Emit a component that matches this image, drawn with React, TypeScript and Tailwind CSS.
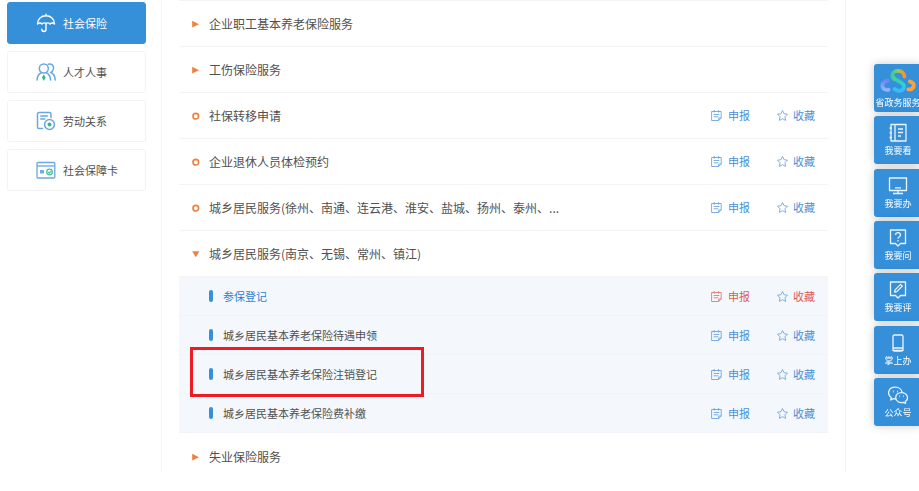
import React from 'react';

type MarkerKind = 'closed' | 'open' | 'leaf';

interface Service {
    name: string;
    kind: MarkerKind;
    children?: { name: string; active?: boolean }[];
}

const services: Service[] = [
    { name: '企业职工基本养老保险服务', kind: 'closed' },
    { name: '工伤保险服务', kind: 'closed' },
    { name: '社保转移申请', kind: 'leaf' },
    { name: '企业退休人员体检预约', kind: 'leaf' },
    { name: '城乡居民服务(徐州、南通、连云港、淮安、盐城、扬州、泰州、...', kind: 'leaf' },
    {
        name: '城乡居民服务(南京、无锡、常州、镇江)',
        kind: 'open',
        children: [
            { name: '参保登记', active: true },
            { name: '城乡居民基本养老保险待遇申领' },
            { name: '城乡居民基本养老保险注销登记' },
            { name: '城乡居民基本养老保险费补缴' },
        ],
    },
    { name: '失业保险服务', kind: 'closed' },
];

const HIGHLIGHTED = '城乡居民基本养老保险注销登记';

const UmbrellaIcon = () => (
    <svg className="w-5 h-5" viewBox="0 0 20 20" fill="none" stroke="#fff" strokeWidth="1.4" strokeLinecap="round" strokeLinejoin="round">
        <path d="M10 1.200v1.500M1.500 11C1.500 6.200 5.200 2.800 10 2.800s8.500 3.400 8.500 8.200c-1-1.400-3.500-1.400-4.500 0-1-1.400-3-1.400-4-.4-1-1-3-1-4 .4-1-1.400-3.500-1.400-4.500 0Z" />
        <path d="M10 10.600v5.700c0 2.900-4.200 2.900-4.200 0" />
    </svg>
);

const PeopleIcon = () => (
    <svg className="w-5 h-5" viewBox="0 0 20 20" fill="none" stroke="#6aa8e0" strokeWidth="1.5" strokeLinecap="round">
        <circle cx="7.800" cy="6.500" r="4.500" />
        <path d="M1 18c.2-3.600 1.600-6 4.300-7.200M14.600 18c-.2-3.600-1.600-6-4.300-7.200" />
        <path d="M12.200 2.300c3.300-1 5.600 1 5.400 4-.1 2-1.100 3.400-2.600 4.200 2.600 1.200 4 3.900 4.200 7.500" />
        <path d="m7.800 13.800 1 1.800-1 1.800-1-1.800Z" fill="#35b98c" stroke="#35b98c" />
    </svg>
);

const ContractIcon = () => (
    <svg className="w-5 h-5" viewBox="0 0 20 20" fill="none" stroke="#6aa8e0" strokeWidth="1.5" strokeLinecap="round">
        <path d="M6.500 17.500H3A1.500 1.500 0 0 1 1.500 16V3A1.500 1.500 0 0 1 3 1.500h10.500A1.500 1.500 0 0 1 15 3v3.500M4.800 5h6.700M4.800 8h4" />
        <circle cx="13.500" cy="13.500" r="4.900" />
        <circle cx="13.500" cy="13.500" r="2" fill="#35b98c" stroke="none" />
    </svg>
);

const CardIcon = () => (
    <svg className="w-5 h-5" viewBox="0 0 20 20" fill="none" stroke="#6aa8e0" strokeWidth="1.3">
        <rect x="1" y="2.500" width="17.800" height="15.500" rx="1" />
        <path d="M1 6h17.800" />
        <path d="M4 10h4v3.500H4z" fill="#6faae0" stroke="none" />
        <circle cx="13.500" cy="12" r="2.800" stroke="#4cc09a" />
        <path d="m12.200 12 1.100 1.100 2-2.200" stroke="#4cc09a" />
    </svg>
);

const categories = [
    { name: '社会保险', icon: <UmbrellaIcon />, active: true },
    { name: '人才人事', icon: <PeopleIcon /> },
    { name: '劳动关系', icon: <ContractIcon /> },
    { name: '社会保障卡', icon: <CardIcon /> },
];

const Marker = ({ kind }: { kind: MarkerKind }) => (
    <svg className="w-2 h-2 shrink-0" viewBox="0 0 8 8" fill="#f08040">
        {kind === 'closed' && <path d="M.2.800 7 4.200.2 7.600Z" />}
        {kind === 'open' && <path d="M.200 1.300h7.200L3.800 7.300Z" />}
        {kind === 'leaf' && <circle cx="3.800" cy="4.200" r="2.800" fill="none" stroke="#f08040" strokeWidth="1.700" />}
    </svg>
);

const Actions = ({ active = false }: { active?: boolean }) => (
    <div className={`flex items-center gap-[27px] text-[11px] ${active ? 'text-[#dd5a56]' : 'text-[#4a8fd8]'}`}>
        <a href="#apply" className="flex items-center gap-[6px]">
            <svg className="w-[11px] h-[11px]" viewBox="0 0 11 11" fill="none" stroke="currentColor" strokeWidth=".9" opacity=".8">
                <path d="M.6 1.500h9.600v6.500L7.700 10.500H.6ZM10.200 8H7.700v2.500M3.200 0v2.600M7.600 0v2.600M2.700 4.500h5.600M2.700 6.800h4.600" />
            </svg>
            申报
        </a>
        <a href="#favorite" className="flex items-center gap-[5px]">
            <svg className="w-[11px] h-[11px]" viewBox="0 0 11 11" fill="none" stroke="#6ea9e0" strokeWidth=".9" strokeLinejoin="round">
                <path d="m5.500.500 1.600 3.200 3.400.500L8 6.700l.6 3.700-3.100-1.700-3.100 1.700L3 6.700.5 4.200l3.400-.5Z" />
            </svg>
            收藏
        </a>
    </div>
);

const LogoIcon = () => (
    <svg className="w-9 h-7 shrink-0" viewBox="0 0 36 28" fill="none" strokeWidth="3.800" strokeLinecap="round">
        <defs>
            <linearGradient id="sTop" x1="0" y1="0" x2="1" y2="0">
                <stop offset="0" stopColor="#35cfa0" />
                <stop offset=".5" stopColor="#a0c850" />
                <stop offset="1" stopColor="#ff8f2e" />
            </linearGradient>
            <linearGradient id="sBottom" x1="0" y1="0" x2="0" y2="1">
                <stop offset="0" stopColor="#35cfa0" />
                <stop offset=".5" stopColor="#2fd0d8" />
                <stop offset="1" stopColor="#35baff" />
            </linearGradient>
            <linearGradient id="left" x1="0" y1="0" x2="0" y2="1">
                <stop offset="0" stopColor="#6f86f0" />
                <stop offset="1" stopColor="#94b2ff" />
            </linearGradient>
        </defs>
        <path d="M7.500 13.500C3.500 14 1.900 17 2.500 19.500c.8 2.500 3 3.700 6 3.200" stroke="url(#left)" />
        <path d="M30 14.500c3.300 1.200 4.300 3.200 3.500 5.200-.8 2-2.800 3-5.200 2.700" stroke="#ffa23a" />
        <path d="M13.500 10.500c2.500 3.700 10.500 4 10.500 9 0 4.700-6 5.700-9.500 2.500" stroke="url(#sBottom)" />
        <path d="M24.500 9.500c-.5-7.200-11.500-7.200-12.200-1.500-.2 1.700.5 3 1.700 4" stroke="url(#sTop)" />
    </svg>
);

const shortcuts = [
    {
        name: '我要看',
        icon: <path d="M3 1.500h15v16.500H3zM7 1.500v16.500M1.500 5H4M1.500 9.800H4M1.500 14.500H4M10 6h5M10 9.500h5M10 13h3" />,
    },
    { name: '我要办', icon: <path d="M1.500 2h17v12.500h-17zM10 14.500V17.500M5 17.500h10M7 11.800h6" /> },
    {
        name: '我要问',
        icon: <path d="M2.500 2h15v13.500h-5L10 18l-2.500-2.500h-5zM7.500 7c0-3.300 5-3.300 5 0 0 1.800-2.500 1.800-2.500 3.800M10 12v1.500" />,
    },
    {
        name: '我要评',
        icon: <path d="M2.500 2h15v13.500h-5L10 18l-2.500-2.500h-5zM6.500 12.200l.6-2.300 5.500-5.500 1.700 1.700-5.500 5.500z" />,
    },
    { name: '掌上办', icon: <path d="M5 3.500A1.500 1.500 0 0 1 6.500 2h7A1.500 1.500 0 0 1 15 3.500v13a1.500 1.500 0 0 1-1.500 1.500h-7A1.500 1.500 0 0 1 5 16.500zM5 15h10v2.500H5z" /> },
    {
        name: '公众号',
        icon: (
            <>
                <path d="M8 14c-1 0-2-.1-2.800-.4L2.700 15l.5-2.600C-1.800 8.700.9 2.200 7.200 2.200c3.800 0 6.600 2.300 7 5.400" />
                <path d="M17.300 16.600c4.500-3.400 1.300-9-3.600-9-3.600 0-6 2.300-6 5 0 3.800 3.800 5.700 7.700 4.700l2.200 1.100Z" />
                <path d="M4.900 6.500h.7M9.200 6.500h.7M11.300 11.200h.6M15.400 11.200h.6" strokeWidth="1.900" />
            </>
        ),
    },
];

export default function App() {
    return (
        <div className="flex items-start bg-white text-[#505050] font-['Noto_Sans_CJK_SC',sans-serif]">
            <nav className="w-[146px] shrink-0 pl-[7px] pt-[2px] flex flex-col gap-[7px]">
                {categories.map(c => (
                    <button
                        key={c.name}
                        type="button"
                        className={`h-[42px] pl-7 flex items-center gap-[7px] rounded-[3px] border text-[11px] cursor-pointer ${c.active ? 'bg-[#3690d9] border-[#3690d9] text-white' : 'bg-white border-[#f3f3f3]'}`}
                    >
                        {c.icon}
                        <span>{c.name}</span>
                    </button>
                ))}
            </nav>

            <main className="flex-1 min-w-0 ml-[15px] mr-[73px] px-[17px] border-x border-[#f4f4f4]">
                <ul className="border-t border-[#f4f4f4]">
                    {services.map((s, i) => (
                        <li key={s.name}>
                            <div className={`flex items-center justify-between px-[13px] ${i === services.length - 1 ? 'h-[39px] pt-2' : 'h-[46px] border-b border-[#f4f4f4]'}`}>
                                <div className="flex items-center gap-[9px] text-[12px]">
                                    <Marker kind={s.kind} />
                                    <span>{s.name}</span>
                                </div>
                                {s.kind === 'leaf' && <Actions />}
                            </div>

                            {s.children && (
                                <ul className="bg-[#f4f8fd]">
                                    {s.children.map(c => (
                                        <li key={c.name} className="relative h-[39px] pl-[30px] pr-[13px] flex items-center justify-between border-b border-[#f0f4f9]">
                                            <div className="flex items-center gap-[10px] text-[11px]">
                                                <span className="w-1 h-3 rounded-[2px] bg-[#3690d9]" />
                                                <span className={c.active ? 'text-[#2f7fd0]' : ''}>{c.name}</span>
                                            </div>
                                            <Actions active={c.active} />
                                            {c.name === HIGHLIGHTED && (
                                                <div className="absolute left-[11px] -top-2 w-[234px] h-[50px] border-[3px] border-[#ed1c24] pointer-events-none" />
                                            )}
                                        </li>
                                    ))}
                                </ul>
                            )}
                        </li>
                    ))}
                </ul>
            </main>

            {/* Floating shortcuts, docked slightly past the right edge */}
            <aside className="fixed top-16 -right-[3px] w-12 h-[362px] flex flex-col justify-between text-[9px] leading-3 text-white">
                <a href="#gov" className="h-12 flex flex-col items-center justify-center gap-[2px] rounded-[3px] bg-[#3690d9] shadow-[0_0_10px_rgba(0,0,0,0.2)] whitespace-nowrap">
                    <LogoIcon />
                    省政务服务
                </a>
                {shortcuts.map(s => (
                    <a key={s.name} href="#shortcut" className="h-12 flex flex-col items-center justify-center gap-[2px] rounded-[3px] bg-[#3690d9] shadow-[0_0_10px_rgba(0,0,0,0.2)]">
                        <svg className="w-5 h-5" viewBox="0 0 20 20" fill="none" stroke="#fff" strokeWidth="1.300" strokeLinejoin="round" opacity=".9">
                            {s.icon}
                        </svg>
                        {s.name}
                    </a>
                ))}
            </aside>
        </div>
    );
}
